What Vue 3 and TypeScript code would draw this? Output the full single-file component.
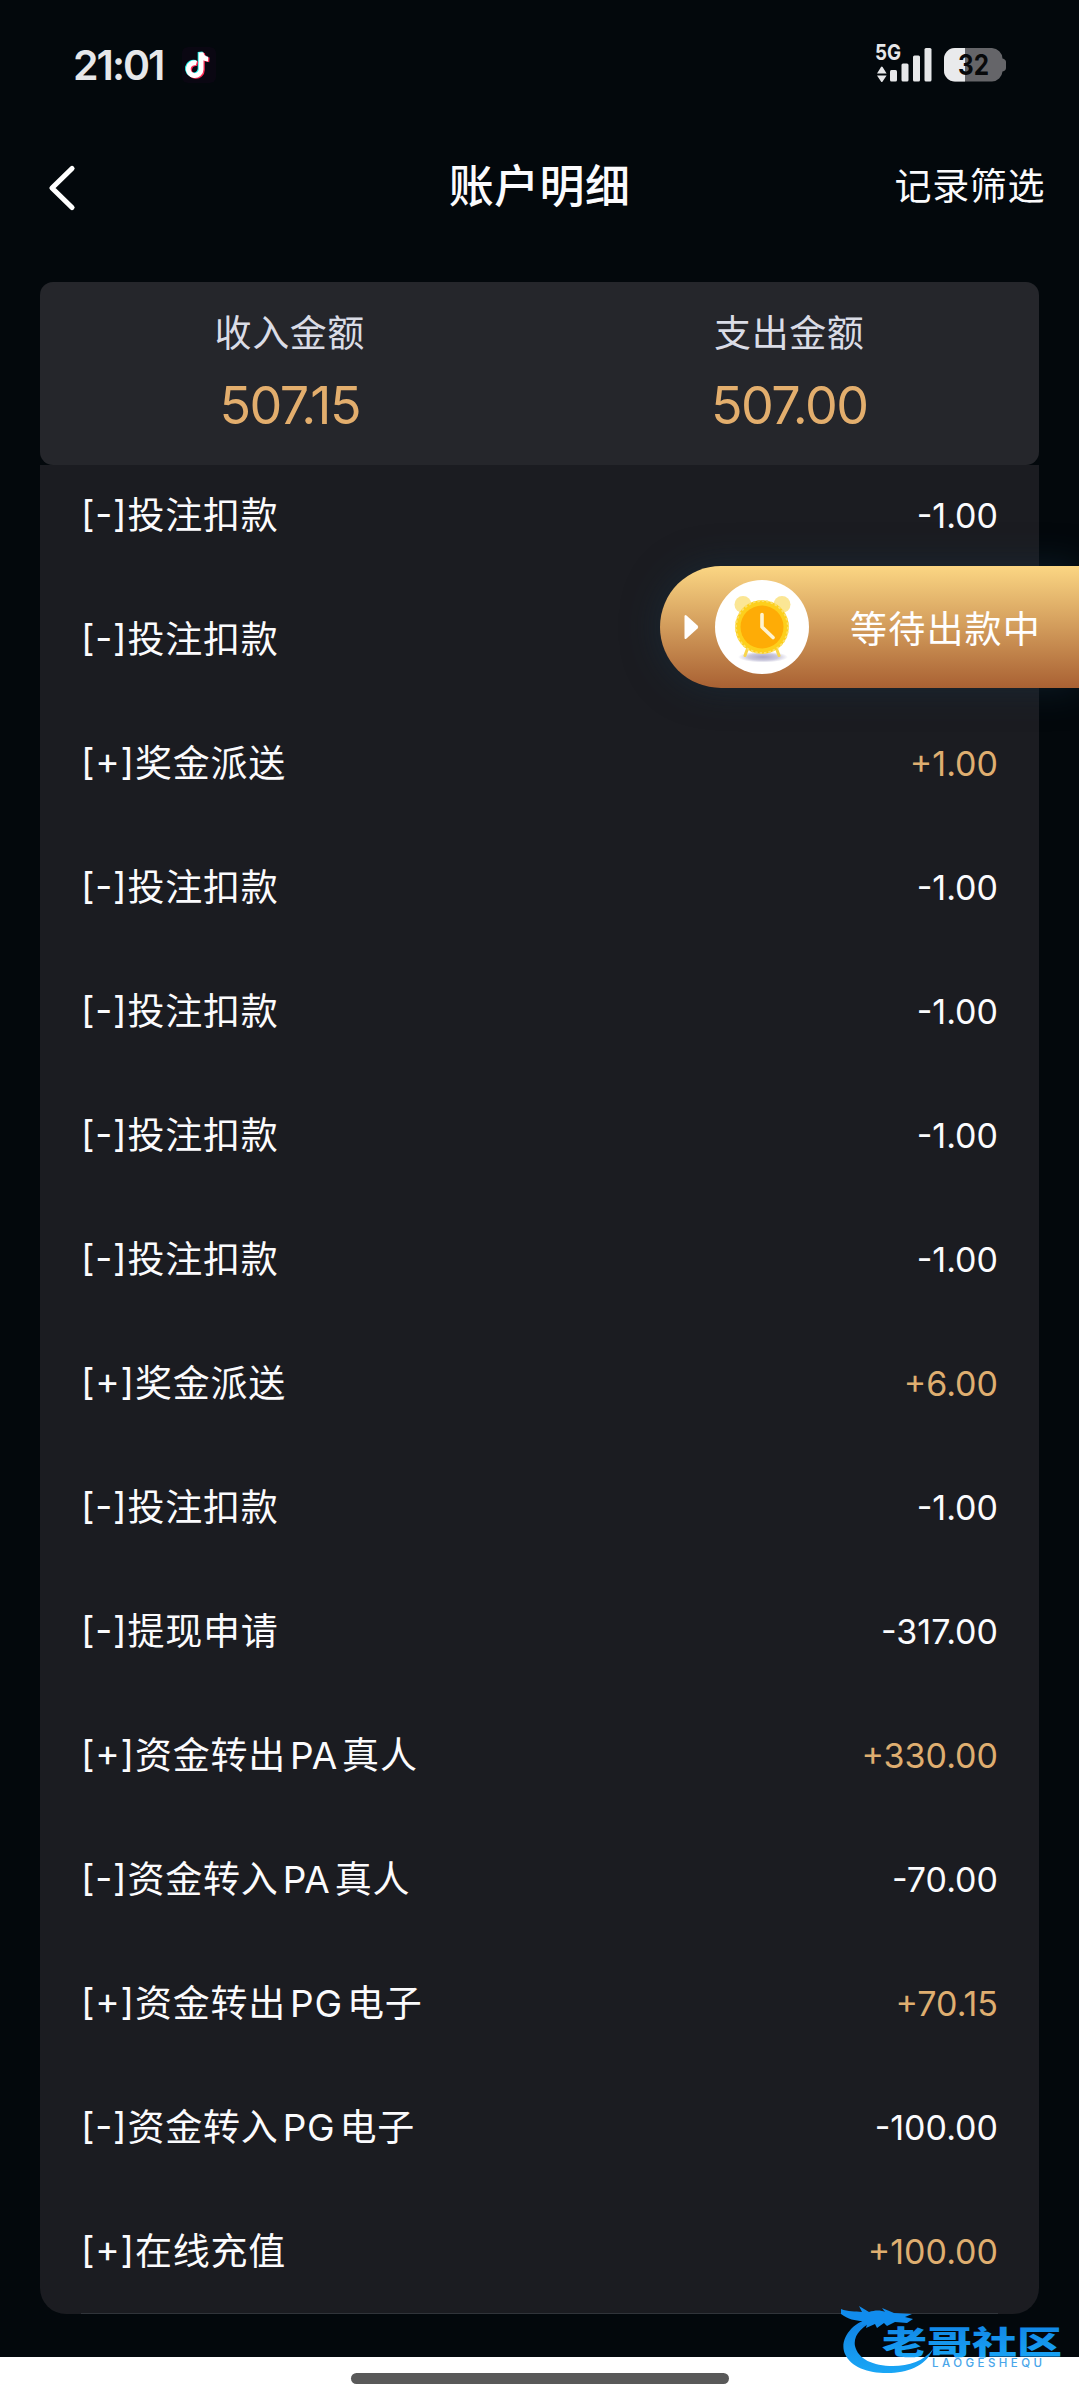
<script setup lang="ts">
interface Entry {
  sign: '+' | '-'
  before: string
  latin?: string
  after?: string
  amount: string
}

const bet: Entry = { sign: '-', before: '投注扣款', amount: '1.00' }

const entries: Entry[] = [
  bet,
  bet,
  { sign: '+', before: '奖金派送', amount: '1.00' },
  bet,
  bet,
  bet,
  bet,
  { sign: '+', before: '奖金派送', amount: '6.00' },
  bet,
  { sign: '-', before: '提现申请', amount: '317.00' },
  { sign: '+', before: '资金转出', latin: 'PA', after: '真人', amount: '330.00' },
  { sign: '-', before: '资金转入', latin: 'PA', after: '真人', amount: '70.00' },
  { sign: '+', before: '资金转出', latin: 'PG', after: '电子', amount: '70.15' },
  { sign: '-', before: '资金转入', latin: 'PG', after: '电子', amount: '100.00' },
  { sign: '+', before: '在线充值', amount: '100.00' },
]

const totals = [
  { label: '收入金额', value: '507.15' },
  { label: '支出金额', value: '507.00' },
]
</script>

<template>
  <div class="screen">
    <header class="status">
      <div class="status-left">
        <span class="time">21:01</span>
        <svg class="tiktok" width="34" height="36" viewBox="0 0 34 36">
          <rect width="34" height="36" rx="6" fill="#0a0712" />
          <g fill="none" stroke-width="4.8">
            <path d="M14.5 16a6.4 6.4 0 1 0 4.6 6.2V5.5c.5 4 3.200 6.400 7 6.600" stroke="#25f4ee" transform="translate(-1 -.6)" />
            <path d="M14.500 16a6.400 6.400 0 1 0 4.600 6.200V5.500c.5 4 3.200 6.400 7 6.600" stroke="#fe2c55" transform="translate(1.300 .8)" />
            <path d="M14.500 16a6.400 6.400 0 1 0 4.600 6.200V5.500c.5 4 3.200 6.400 7 6.600" stroke="#fff" />
          </g>
        </svg>
      </div>
      <div class="status-right">
        <svg width="58" height="40" viewBox="0 0 58 40">
          <text x="0" y="16.300" class="net" textLength="26" lengthAdjust="spacingAndGlyphs">5G</text>
          <g fill="#e6e7e9">
            <path d="M2 29.500l4-6.500q.8-1 1.600 0l4 6.500zM2 31.500h9.600l-4 6q-.8 1-1.600 0z" />
            <rect x="15" y="26" width="7" height="11.500" rx="1.500" />
            <rect x="26.500" y="19.500" width="7" height="18" rx="1.500" />
            <rect x="38" y="11.500" width="7" height="26" rx="1.500" />
            <rect x="49.500" y="4" width="7" height="33.500" rx="1.500" />
          </g>
        </svg>
        <svg class="battery" width="64" height="34" viewBox="0 0 64 34">
          <path d="M11 0H48a11 11 0 0 1 10.500 10.500q3.500 1 3.500 3.500v6q0 2.500-3.500 3.500A11 11 0 0 1 48 33.500H11A11 11 0 0 1 0 22.500V11A11 11 0 0 1 11 0z" fill="#656569" />
          <path d="M11 0H21V33.500H11A11 11 0 0 1 0 22.500V11A11 11 0 0 1 11 0z" fill="#e9eaec" />
          <text x="14" y="27" class="level" textLength="31" lengthAdjust="spacingAndGlyphs">32</text>
        </svg>
      </div>
    </header>

    <nav class="nav">
      <svg class="back" width="30" height="48" viewBox="0 0 30 48">
        <path d="M25 4.500L5 24l20 19.500" fill="none" stroke="#fff" stroke-width="5.200" stroke-linecap="round" stroke-linejoin="round" />
      </svg>
      <h1>账户明细</h1>
      <span class="filter">记录筛选</span>
    </nav>

    <main>
      <section class="summary">
        <div v-for="t in totals" :key="t.label" class="total">
          <span class="label">{{ t.label }}</span>
          <span class="value">{{ t.value }}</span>
        </div>
      </section>

      <ul class="list">
        <li v-for="(e, i) in entries" :key="i">
          <span class="name"><span class="tag">[{{ e.sign }}]</span>{{ e.before }}<span v-if="e.latin" class="latin">{{ e.latin }}</span>{{ e.after }}</span>
          <span class="amount" :class="{ plus: e.sign === '+' }">{{ e.sign }}{{ e.amount }}</span>
        </li>
      </ul>
    </main>

    <footer class="gesture"><i></i></footer>

    <aside class="pending">
      <svg class="tri" width="15" height="26" viewBox="0 0 15 26">
        <path d="M.5 2.500Q.5 0 2.500 1.500L13.500 11.500q1.500 1.500 0 3L2.500 24.500Q.5 26 .5 23.500z" fill="#fff" />
      </svg>
      <svg class="clock" width="94" height="94" viewBox="0 0 94 94">
        <defs>
          <radialGradient id="ground"><stop offset="0" stop-color="#a9a6c6" /><stop offset=".6" stop-color="#c9c7dc" /><stop offset="1" stop-color="#fff" /></radialGradient>
        </defs>
        <circle cx="47" cy="47" r="47" fill="#fff" />
        <ellipse cx="48" cy="77" rx="25" ry="5.500" fill="url(#ground)" />
        <circle cx="28" cy="24.500" r="8.500" fill="#fbe694" />
        <circle cx="67" cy="24.500" r="8.500" fill="#fbe694" />
        <path d="M32 70l-2 5.500M62 70l2 5.500" stroke="#f8d64e" stroke-width="3" stroke-linecap="round" />
        <circle cx="47" cy="47" r="26.800" fill="#fdcf1c" />
        <circle cx="47" cy="47" r="26" fill="none" stroke="#fbdf68" stroke-width="2" stroke-dasharray="2.500 2" />
        <circle cx="47" cy="47" r="21.500" fill="#feac06" />
        <path d="M47 34.500V47l11 10.500" fill="none" stroke="#fff3cf" stroke-width="3.600" stroke-linecap="round" stroke-linejoin="round" />
      </svg>
      <span>等待出款中</span>
    </aside>

    <svg class="brand" width="224" height="72" viewBox="0 0 224 72">
      <defs>
        <linearGradient id="sea" x1="0" y1="0" x2="0" y2="1">
          <stop offset="0" stop-color="#0f7fe2" />
          <stop offset="1" stop-color="#1aa7f6" />
        </linearGradient>
      </defs>
      <path d="M33 12C9 17-2 36 4 49c6 14 26 20 46 19 20-1 36-9 42-24-9 12-24 17-40 17-20 0-35-7-38-20-2-10 6-20 22-26z" fill="url(#sea)" />
      <path d="M0 4c7 3 14 2 21 3l-3-6 10 6c6-2 12-2 16 0l-3-4 12 5 18 1-7 3 8 2-6 4-12-1-8 4-3-3-7 5-2-4-9 4 1-4-8 2 4-5c-8 0-15-2-22-7z" fill="#118ced" />
      <text class="brand-cn" x="41" y="48.500" textLength="180" lengthAdjust="spacingAndGlyphs" fill="url(#sea)">老哥社区</text>
      <text class="brand-en" x="91" y="62" textLength="110">LAOGESHEQU</text>
    </svg>
  </div>
</template>

<style>
body {
  margin: 0;
  background: #03080c;
}
</style>

<style scoped>
.screen {
  position: relative;
  width: 1079px;
  height: 2400px;
  display: flex;
  flex-direction: column;
  overflow: hidden;
  background: #03080c;
  color: #fbfbfd;
  font-family: Inter, 'Noto Sans CJK SC', sans-serif;
}

.status {
  height: 130px;
  box-sizing: border-box;
  padding: 41px 71px 0 73px;
  display: flex;
  justify-content: space-between;
  align-items: flex-start;
}

.status-left,
.status-right {
  display: flex;
}

.time {
  font-size: 41px;
  line-height: 48px;
  font-weight: 600;
  letter-spacing: -2px;
  color: #e6e7e9;
}

.tiktok {
  margin: 6px 0 0 19px;
}

.status-right {
  padding-top: 3px;
}

.net {
  font: 700 22px Inter, sans-serif;
  fill: #e6e7e9;
}

.battery {
  margin: 4px 0 0 11px;
}

.level {
  font: 700 28px Inter, sans-serif;
  fill: #08090b;
}

.nav {
  height: 152px;
  box-sizing: border-box;
  padding: 34px 34px 0 47px;
  display: grid;
  grid-template-columns: 1fr auto 1fr;
  align-items: start;
}

.back {
  display: block;
}

h1 {
  margin: -9px 0 0 -13px;
  font-size: 45px;
  line-height: 64px;
  font-weight: 500;
  letter-spacing: 0.4px;
}

.filter {
  justify-self: end;
  margin-top: -5px;
  font-size: 37px;
  line-height: 56px;
  letter-spacing: 0.6px;
}

main {
  height: 2075px;
  box-sizing: border-box;
  padding: 0 40px;
}

.summary {
  position: relative;
  z-index: 1;
  height: 183px;
  display: grid;
  grid-template-columns: 1fr 1fr;
  border-radius: 13px;
  background: #25262b;
}

.total {
  display: flex;
  flex-direction: column;
  align-items: center;
}

.label {
  margin-top: 25px;
  font-size: 37px;
  line-height: 54px;
  letter-spacing: 0.6px;
  color: #dadce6;
}

.value {
  margin-top: 15px;
  font-size: 52px;
  line-height: 60px;
  letter-spacing: -1.5px;
  color: #e3ae6d;
}

.list {
  height: 1849px;
  margin: 0;
  padding: 0 41px;
  box-sizing: border-box;
  list-style: none;
  display: flex;
  flex-direction: column;
  justify-content: flex-end;
  border-radius: 0 0 26px 26px;
  background: #1b1c21;
}

li {
  flex: none;
  height: 124px;
  display: flex;
  justify-content: space-between;
  align-items: center;
}

li:last-child {
  box-sizing: border-box;
  border-bottom: 1px solid #30343a;
}

.name {
  font-size: 37px;
  line-height: 56px;
  letter-spacing: 0.8px;
  white-space: nowrap;
}

.tag,
.amount {
  font-feature-settings: 'case';
}

.latin {
  margin: 0 4px;
}

.amount {
  font-size: 34px;
  line-height: 56px;
}

.plus {
  color: #dfae70;
}

.gesture {
  flex: 1;
  display: flex;
  justify-content: center;
  background: #fff;
}

.gesture i {
  width: 378px;
  height: 11px;
  margin-top: 16px;
  border-radius: 6px;
  background: #595959;
}

.pending {
  position: absolute;
  z-index: 2;
  top: 566px;
  right: 0;
  width: 419px;
  height: 122px;
  box-sizing: border-box;
  padding-left: 24px;
  display: flex;
  align-items: center;
  border-radius: 61px 0 0 61px;
  background: linear-gradient(#fbd683, #a96133);
  box-shadow: 0 0 36px rgba(24, 52, 70, 0.5);
  color: #fff;
}

.clock {
  margin-left: 16px;
}

.pending span {
  margin-left: 41px;
  font-size: 37px;
  letter-spacing: 1.2px;
  white-space: nowrap;
}

.brand {
  position: absolute;
  z-index: 3;
  left: 841px;
  top: 2305px;
}

.brand-cn {
  font: 900 32px 'Noto Sans CJK SC', sans-serif;
}

.brand-en {
  font: 500 11.5px Inter, sans-serif;
  fill: #49a6ea;
}
</style>
